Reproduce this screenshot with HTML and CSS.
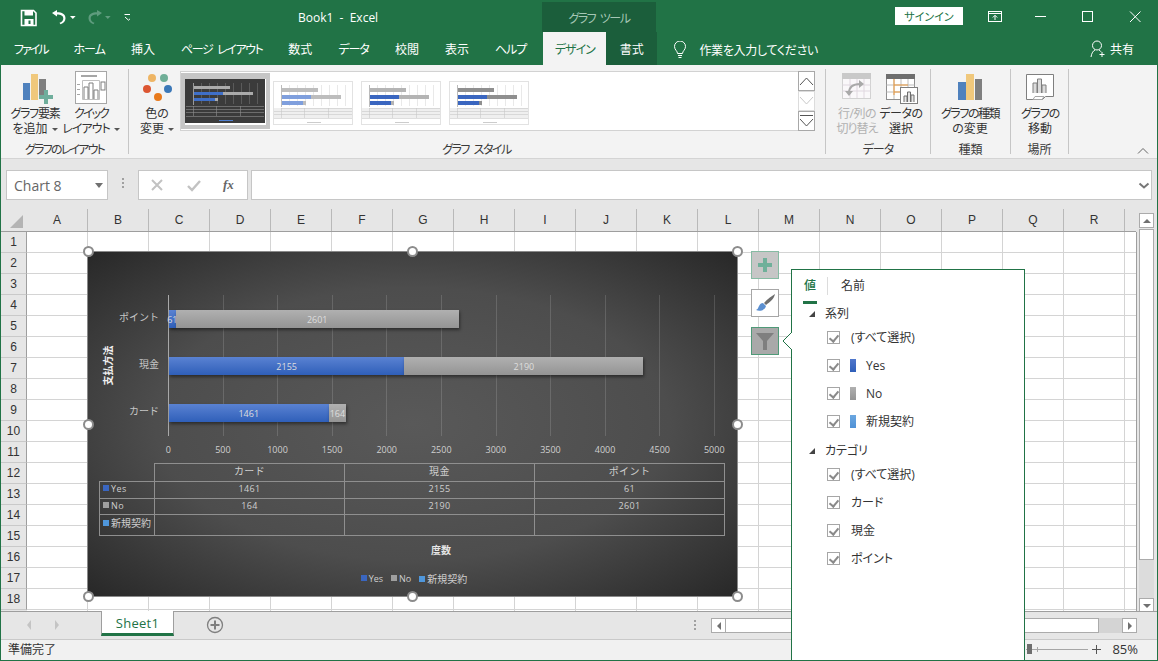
FILE: index.html
```html
<!DOCTYPE html>
<html lang="ja">
<head>
<meta charset="utf-8">
<title>Book1 - Excel</title>
<link rel="stylesheet" href="styles.css">
</head>
<body>
<svg class="defs" width="0" height="0">
  <symbol id="thumb" viewBox="0 0 80 44">
    <rect width="80" height="44" fill="#fff"/>
    <g fill="#e9e9e9"><rect x="16" y="4" width="1" height="21"/><rect x="24" y="4" width="1" height="21"/><rect x="32" y="4" width="1" height="21"/><rect x="40" y="4" width="1" height="21"/><rect x="48" y="4" width="1" height="21"/><rect x="56" y="4" width="1" height="21"/><rect x="64" y="4" width="1" height="21"/><rect x="72" y="4" width="1" height="21"/></g>
    <rect class="tg" x="9" y="7" width="36" height="4"/><rect class="tb" x="9" y="14" width="29" height="4"/><rect class="tg" x="38" y="14" width="30" height="4"/><rect class="tb" x="9" y="20" width="21" height="4"/><rect class="tg" x="30" y="20" width="3" height="4"/>
    <rect x="8" y="4" width="1" height="22" fill="#bbb"/>
    <rect x="1" y="27" width="78" height="10" fill="#efefef"/>
    <g fill="#c8c8c8"><rect x="8" y="27" width="71" height=".6"/><rect x="1" y="30" width="78" height=".6"/><rect x="1" y="33" width="78" height=".6"/><rect x="1" y="37" width="78" height=".6"/><rect x="8" y="27" width=".6" height="10"/><rect x="31" y="27" width=".6" height="10"/><rect x="55" y="27" width=".6" height="10"/></g>
    <rect x="34" y="41" width="14" height="1" fill="#ccc"/>
  </symbol>
</svg>
<div class="app">
  <header class="titlebar">
    <div class="qat">
      <svg width="130" height="32" viewBox="0 0 130 32">
        <path d="M21.5 10.5h12l2.5 2.500v12.500h-14.500z" fill="none" stroke="#fff" stroke-width="1.600"/>
        <rect x="24.500" y="10.500" width="8.500" height="5" fill="#fff"/><rect x="24.500" y="19" width="9" height="6" fill="#fff"/><rect x="28.500" y="20.500" width="2" height="3.500" fill="#217346"/>
        <path d="M52 13l5-3v2.200c5 0 8.500 1.800 8.500 6 0 3-2 5-5 6l-1-1.400c2.200-.8 3.800-2.300 3.800-4.400 0-2.800-2.700-3.900-6.300-3.900v2.100z" fill="#fff"/>
        <path d="M70 16h5.600l-2.800 3z" fill="#fff"/>
        <path d="M102 13l-5-3v2.200c-5 0-8.500 1.800-8.500 6 0 3 2 5 5 6l1-1.400c-2.200-.8-3.800-2.300-3.800-4.400 0-2.800 2.700-3.900 6.300-3.900v2.100z" fill="#5f9c7e"/>
        <path d="M105 16h5.600l-2.800 3z" fill="#5f9c7e"/>
        <path d="M124.500 14.500h8M125 17l3.500 3.200 3.500-3.200" fill="none" stroke="#fff" stroke-width="1"/>
      </svg>
    </div>
    <div class="doc-title">Book1&nbsp; - &nbsp;Excel</div>
    <div class="ctx-title">グラフ ツール</div>
    <button class="signin">サインイン</button>
    <svg class="winctl" width="170" height="32" viewBox="0 0 170 32">
      <g fill="none" stroke="#fff" stroke-width="1">
        <rect x="7.500" y="11.500" width="13" height="10"/><path d="M7.500 13.500h13M14 20v-4.500M11.800 17.500l2.200-2.200 2.200 2.200"/>
        <path d="M54 16.500h11"/>
        <rect x="101.500" y="11.500" width="10" height="10"/>
        <path d="M149 11.500l10.500 10.500M159.500 11.500l-10.500 10.500"/>
      </g>
    </svg>
  </header>

  <nav class="tabs">
    <a class="tab t-file ls2">ファイル</a>
    <a class="tab ls1">ホーム</a>
    <a class="tab">挿入</a>
    <a class="tab t-page">ページ レイアウト</a>
    <a class="tab">数式</a>
    <a class="tab ls1">データ</a>
    <a class="tab">校閲</a>
    <a class="tab">表示</a>
    <a class="tab t-help ls1">ヘルプ</a>
    <a class="tab tab-on ls1">デザイン</a>
    <a class="tab tab-ctx">書式</a>
    <div class="tell">
      <svg width="14" height="18" viewBox="0 0 14 18"><path d="M4.500 12.500c0-2.500-3-3.700-3-7a5.500 5.500 0 0 1 11 0c0 3.300-3 4.500-3 7zM5 14.500h4M5.500 16.500h3" fill="none" stroke="#fff" stroke-width="1"/></svg>
      <span>作業を入力してください</span>
    </div>
    <div class="share">
      <svg width="16" height="18" viewBox="0 0 16 18"><circle cx="7" cy="5.500" r="4.500" fill="none" stroke="#fff"/><path d="M1 17c.5-4 2.500-6.500 4-7M9 10c.8.300 1.500 1 2 1.800M12 12v5M9.500 14.500h5" fill="none" stroke="#fff"/></svg>
      <span>共有</span>
    </div>
  </nav>

  <section class="ribbon">
    <div class="group g-layout">
      <div class="group-body">
        <div class="rbtn w56">
          <svg width="36" height="34" viewBox="0 0 36 34"><rect x="6" y="12" width="7" height="17" fill="#4f81bd"/><rect x="14" y="3" width="7" height="26" fill="#f0c87c"/><rect x="22" y="8" width="7" height="16" fill="#7f7f7f"/><path d="M27 19h4v5h5v4h-5v5h-4v-5h-5v-4h5z" fill="#6fae9c"/></svg>
          <span class="ls12">グラフ要素</span><span>を追加<i class="caret"></i></span>
        </div>
        <div class="rbtn w56">
          <svg width="36" height="34" viewBox="0 0 36 34"><rect x="2.500" y=".5" width="31" height="32" fill="#fff" stroke="#a6a6a6"/><rect x="8" y="4" width="16" height="2" fill="#a6a6a6"/><path d="M9.500 9.500h17v19h-17z" fill="none" stroke="#bfbfbf"/><path d="M11 28v-12h4v12M16 28v-16h4v16M21 28v-9h4v9" fill="#fff" stroke="#7f7f7f"/><rect x="28" y="11" width="4" height="8" fill="#fff" stroke="#7f7f7f"/><g fill="#a6a6a6"><rect x="4" y="13" width="3" height="1"/><rect x="4" y="18" width="3" height="1"/><rect x="4" y="23" width="3" height="1"/></g></svg>
          <span class="ls2">クイック</span><span class="ls1">レイアウト<i class="caret"></i></span>
        </div>
      </div>
      <div class="group-label ls18">グラフのレイアウト</div>
    </div>

    <div class="group g-style">
      <div class="group-body">
        <div class="rbtn w48">
          <svg width="36" height="34" viewBox="0 0 36 34"><circle cx="13" cy="7" r="4" fill="#eeb565"/><circle cx="25" cy="7" r="4" fill="#6fae97"/><circle cx="8" cy="18" r="4" fill="#dc5632"/><circle cx="29" cy="18" r="4" fill="#3b78b8"/><circle cx="19" cy="26" r="4" fill="#e87a1c"/></svg>
          <span>色の</span><span>変更<i class="caret"></i></span>
        </div>
        <div class="gallery">
          <div class="thumb thumb-on">
            <svg class="thumb-dark" width="80" height="44" viewBox="0 0 80 44">
              <rect width="80" height="44" fill="#3b3b3b"/>
              <g fill="#5a5a5a"><rect x="16" y="4" width="1" height="21"/><rect x="24" y="4" width="1" height="21"/><rect x="32" y="4" width="1" height="21"/><rect x="40" y="4" width="1" height="21"/><rect x="48" y="4" width="1" height="21"/><rect x="56" y="4" width="1" height="21"/><rect x="64" y="4" width="1" height="21"/><rect x="72" y="4" width="1" height="21"/></g>
              <rect x="9" y="7" width="36" height="3" fill="#aaa"/><rect x="9" y="13" width="29" height="3" fill="#3f6fc8"/><rect x="38" y="13" width="30" height="3" fill="#aaa"/><rect x="9" y="19" width="21" height="3" fill="#3f6fc8"/><rect x="30" y="19" width="3" height="3" fill="#aaa"/>
              <rect x="8" y="4" width="1" height="22" fill="#999"/>
              <g fill="#8f8f8f"><rect x="1" y="27" width="78" height=".6"/><rect x="1" y="30" width="78" height=".6"/><rect x="1" y="33" width="78" height=".6"/><rect x="1" y="37" width="78" height=".6"/><rect x="8" y="27" width=".6" height="10"/><rect x="31" y="27" width=".6" height="10"/><rect x="55" y="27" width=".6" height="10"/></g>
              <rect x="34" y="41" width="14" height="1" fill="#4f7fd0"/>
            </svg>
          </div>
          <svg class="thumb-light th-a" width="80" height="44"><use href="#thumb"/></svg>
          <svg class="thumb-light th-b" width="80" height="44"><use href="#thumb"/></svg>
          <svg class="thumb-light th-c" width="80" height="44"><use href="#thumb"/></svg>
          <div class="spin">
            <div class="spin-btn"><svg width="15" height="10" viewBox="0 0 15 10"><path d="M1 9l6.500-7 6.500 7" fill="none" stroke="#555"/></svg></div>
            <div class="spin-btn off"><svg width="15" height="10" viewBox="0 0 15 10"><path d="M1 1l6.500 7 6.500-7" fill="none" stroke="#c9c9c9"/></svg></div>
            <div class="spin-btn"><svg width="15" height="14" viewBox="0 0 15 14"><path d="M1 1.500h13M1 5l6.500 7 6.500-7" fill="none" stroke="#555"/></svg></div>
          </div>
        </div>
      </div>
      <div class="group-label gl-style">グラフ スタイル</div>
    </div>

    <div class="group g-data">
      <div class="group-body">
        <div class="rbtn w44 off">
          <svg width="36" height="34" viewBox="0 0 36 34"><rect x="3.500" y="2.500" width="28" height="25" fill="#faf8fa" stroke="#d2d2d2"/><rect x="3" y="2" width="29" height="6" fill="#c9c9c9"/><path d="M3.500 14h28M3.500 20h28M11 8v19M18 8v19M25 8v19" stroke="#e0d8e0" fill="none"/><path d="M10 22c0-6 4-9 11-9" fill="none" stroke="#a9a9a9" stroke-width="2"/><path d="M20 9l5 4-5 4zM6 20l4 5 4-5z" fill="#a9a9a9"/></svg>
          <span class="ls05">行/列の</span><span class="ls1">切り替え</span>
        </div>
        <div class="rbtn w44">
          <svg width="36" height="34" viewBox="0 0 36 34"><rect x="3.500" y="3.500" width="28" height="25" fill="#fff" stroke="#8f8f8f"/><rect x="3" y="3" width="29" height="5" fill="#6e6e6e"/><path d="M3.500 14h28M3.500 21h28M11 8v20M18 8v20M25 8v20" stroke="#bdbdbd" fill="none"/><path d="M11 8v16M11 14h14M11 21h7" stroke="#ed9a3c" fill="none"/><rect x="17.500" y="16.500" width="17" height="16" fill="#fff" stroke="#7f7f7f"/><path d="M21 31v-6h3v6M24.500 31v-10h3v10M28 31v-7h3v7" fill="#e6e6e6" stroke="#6e6e6e"/></svg>
          <span class="ls05">データの</span><span>選択</span>
        </div>
      </div>
      <div class="group-label ls1">データ</div>
    </div>

    <div class="group g-type">
      <div class="group-body">
        <div class="rbtn w70">
          <svg width="36" height="34" viewBox="0 0 36 34"><rect x="6" y="11" width="8" height="18" fill="#4f81bd"/><rect x="14" y="3" width="8" height="26" fill="#f0c87c"/><rect x="23" y="8" width="7" height="21" fill="#7f7f7f"/></svg>
          <span class="ls15">グラフの種類</span><span>の変更</span>
        </div>
      </div>
      <div class="group-label">種類</div>
    </div>

    <div class="group g-loc">
      <div class="group-body">
        <div class="rbtn w50">
          <svg width="36" height="34" viewBox="0 0 36 34"><path d="M4.500 3.500h27v22h-8l-3 3h-16z" fill="#fff" stroke="#7f7f7f"/><path d="M11 22v-10h4v10M15.500 22v-14h4v14M20 22v-8h4v8" fill="#dcdcdc" stroke="#7f7f7f"/><path d="M13 25.500h9l-2 3h-9z" fill="#fff" stroke="#a6a6a6"/></svg>
          <span class="ls12">グラフの</span><span>移動</span>
        </div>
      </div>
      <div class="group-label">場所</div>
    </div>

    <svg class="collapse" width="12" height="8" viewBox="0 0 12 8"><path d="M1 6.500l5-5 5 5" fill="none" stroke="#666"/></svg>
  </section>

  <section class="formula">
    <div class="namebox"><span>Chart 8</span><i class="tri-down"></i></div>
    <div class="fdots"><i></i><i></i><i></i></div>
    <div class="fxbox">
      <svg width="14" height="14" viewBox="0 0 14 14"><path d="M2 2l10 10M12 2L2 12" stroke="#c2c2c2" stroke-width="2" fill="none"/></svg>
      <svg width="16" height="14" viewBox="0 0 16 14"><path d="M2 8l4 4 8-9" stroke="#c2c2c2" stroke-width="2.400" fill="none"/></svg>
      <span class="fx">fx</span>
    </div>
    <div class="finput"><svg width="12" height="8" viewBox="0 0 12 8"><path d="M1.500 1.500l4.500 4 4.500-4" stroke="#777" stroke-width="2" fill="none"/></svg></div>
  </section>

  <section class="sheet">
    <div class="sheet-main">
      <div class="colheads">
        <div class="corner"><svg width="14" height="14" viewBox="0 0 14 14"><path d="M13 0v13H0z" fill="#b4b4b4"/></svg></div>
        <div class="ch">A</div><div class="ch">B</div><div class="ch">C</div><div class="ch">D</div><div class="ch">E</div><div class="ch">F</div><div class="ch">G</div><div class="ch">H</div><div class="ch">I</div><div class="ch">J</div><div class="ch">K</div><div class="ch">L</div><div class="ch">M</div><div class="ch">N</div><div class="ch">O</div><div class="ch">P</div><div class="ch">Q</div><div class="ch">R</div>
      </div>
      <div class="sheet-body">
        <div class="rowheads">
          <div class="rh">1</div><div class="rh">2</div><div class="rh">3</div><div class="rh">4</div><div class="rh">5</div><div class="rh">6</div><div class="rh">7</div><div class="rh">8</div><div class="rh">9</div><div class="rh">10</div><div class="rh">11</div><div class="rh">12</div><div class="rh">13</div><div class="rh">14</div><div class="rh">15</div><div class="rh">16</div><div class="rh">17</div><div class="rh">18</div>
        </div>
        <div class="cells"></div>
      </div>
    </div>
    <div class="vscroll">
      <div class="sb-btn"><i class="tri-up"></i></div>
      <div class="sb-thumb"></div>
      <div class="sb-track"></div>
      <div class="sb-btn"><i class="tri-down small"></i></div>
    </div>
  </section>

  <section class="tabbar">
    <div class="sheetnav"><i class="nav-l"></i><i class="nav-r"></i></div>
    <div class="sheettab">Sheet1</div>
    <svg class="addsheet" width="18" height="18" viewBox="0 0 18 18"><circle cx="9" cy="9" r="7.500" fill="none" stroke="#7f7f7f" stroke-width="1.300"/><path d="M9 4.500v9M4.500 9h9" stroke="#7f7f7f" stroke-width="2"/></svg>
    <div class="fdots tdots"><i></i><i></i><i></i></div>
    <div class="hscroll">
      <div class="sb-btn h"><i class="tri-left"></i></div>
      <div class="hthumb"></div>
      <div class="htrack"></div>
      <div class="sb-btn h"><i class="tri-right"></i></div>
    </div>
  </section>

  <footer class="status">
    <span class="ready">準備完了</span>
    <div class="zoomctl">
      <svg width="76" height="12" viewBox="0 0 76 12"><path d="M0 6.500h62M11.500 4v5" stroke="#a6a6a6" fill="none"/><rect x="1" y="1" width="5" height="10" fill="#6e6e6e"/><path d="M66 6.500h9M70.500 2v9" stroke="#555" fill="none"/></svg>
      <span class="zoomval">85%</span>
    </div>
  </footer>

  <div class="chart">
    <div class="chart-main">
      <div class="ytitle"><span>支払方法</span></div>
      <div class="ylabels"><span>ポイント</span><span>現金</span><span>カード</span></div>
      <div class="plot">
        <div class="bar"><div class="seg blue" style="width:6.7px">61</div><div class="seg gray" style="width:283px">2601</div></div>
        <div class="bar"><div class="seg blue" style="width:235.300px">2155</div><div class="seg gray" style="width:239.200px">2190</div></div>
        <div class="bar"><div class="seg blue" style="width:159.500px">1461</div><div class="seg gray" style="width:17.900px">164</div></div>
      </div>
    </div>
    <div class="xlabels"><span>0</span><span>500</span><span>1000</span><span>1500</span><span>2000</span><span>2500</span><span>3000</span><span>3500</span><span>4000</span><span>4500</span><span>5000</span></div>
    <table class="dtable">
      <colgroup><col class="c0"><col class="c1"><col class="c1"><col class="c1"></colgroup>
      <tr class="r-head"><td class="blank"></td><td>カード</td><td>現金</td><td>ポイント</td></tr>
      <tr class="r-a"><th><i class="sw s-blue"></i>Yes</th><td>1461</td><td>2155</td><td>61</td></tr>
      <tr class="r-b"><th><i class="sw s-gray"></i>No</th><td>164</td><td>2190</td><td>2601</td></tr>
      <tr class="r-c"><th><i class="sw s-sky"></i>新規契約</th><td></td><td></td><td></td></tr>
    </table>
    <div class="xtitle">度数</div>
    <div class="legend">
      <span><i class="sw s-blue"></i>Yes</span><span><i class="sw s-gray"></i>No</span><span><i class="sw s-sky"></i>新規契約</span>
    </div>
    <i class="handle h-tl"></i><i class="handle h-tc"></i><i class="handle h-tr"></i>
    <i class="handle h-ml"></i><i class="handle h-mr"></i>
    <i class="handle h-bl"></i><i class="handle h-bc"></i><i class="handle h-br"></i>
  </div>

  <div class="floatbtns">
    <div class="fbtn fb-plus"><svg width="18" height="18" viewBox="0 0 18 18"><path d="M7 2h4v5h5v4h-5v5H7v-5H2V7h5z" fill="#6fb09a"/></svg></div>
    <div class="fbtn fb-brush"><svg width="24" height="24" viewBox="0 0 24 24"><path d="M22 3c-3 2-8 5-11 9l2 2c4-3 8-6 9-11z" fill="#6e6e6e"/><path d="M10 12l3 3c-1 4-6 6-10 4 2-1 2-2 3-4 1-2 2-3 4-3z" fill="#5b8fd0"/></svg></div>
    <div class="fbtn fb-filter"><svg width="22" height="22" viewBox="0 0 22 22"><path d="M2 3h18l-7 8v9h-4v-9z" fill="#7f7f7f"/></svg></div>
  </div>

  <aside class="panel">
    <svg class="panel-tip" width="11" height="20" viewBox="0 0 11 20"><path d="M10 1L1 10l9 9" fill="#fff" stroke="#217346"/><rect x="10" y="1" width="1" height="18" fill="#fff"/></svg>
    <div class="ptabs">
      <div class="ptab-on">値</div>
      <i class="pdiv"></i>
      <div class="ptab">名前</div>
    </div>
    <div class="phead"><i class="ptri"></i>系列</div>
    <div class="prow"><i class="cb"></i><span>(すべて選択)</span></div>
    <div class="prow"><i class="cb"></i><i class="psw p-blue"></i><span>Yes</span></div>
    <div class="prow"><i class="cb"></i><i class="psw p-gray"></i><span>No</span></div>
    <div class="prow"><i class="cb"></i><i class="psw p-sky"></i><span>新規契約</span></div>
    <div class="phead ph2"><i class="ptri"></i>カテゴリ</div>
    <div class="prow"><i class="cb"></i><span>(すべて選択)</span></div>
    <div class="prow"><i class="cb"></i><span>カード</span></div>
    <div class="prow"><i class="cb"></i><span>現金</span></div>
    <div class="prow"><i class="cb"></i><span>ポイント</span></div>
  </aside>
</div>
</body>
</html>
```
FILE: styles.css
```css
* { box-sizing: border-box; }
html, body { margin: 0; padding: 0; background: #fff; }
body { font-family: "Open Sans", "Noto Sans CJK JP", sans-serif; font-size: 12px; color: #333; }
.defs { position: absolute; }
i { display: block; font-style: normal; }
.app {
  position: relative; width: 1158px; height: 661px; overflow: hidden;
  border: 1px solid #217346; border-top: 0;
  display: flex; flex-direction: column;
  background: #e6e6e6;
  font-feature-settings: "palt";
}
.ls05 { letter-spacing: -.5px; }
.ls1 { letter-spacing: -1px; }
.ls12 { letter-spacing: -1.2px; }
.ls15 { letter-spacing: -1.5px; }
.ls18 { letter-spacing: -1.8px; }
.ls2 { letter-spacing: -2px; }

/* title bar */
.titlebar { height: 32px; margin: 0 -1px; background: #217346; display: flex; color: #fff; flex: none; }
.qat { width: 298px; flex: none; }
.qat svg { display: block; }
.doc-title { width: 244px; flex: none; line-height: 35px; font-size: 12px; font-family: "Open Sans", sans-serif; }
.ctx-title { width: 114px; margin-top: 2px; background: #1b5e3b; color: #a5c7b5; text-align: center; line-height: 33px; flex: none; letter-spacing: -1.5px; word-spacing: 3px; }
.signin {
  margin: 7px 0 0 239px; width: 68px; height: 18px; border: 0; padding: 0; background: #fff;
  color: #217346; font: 11px "Noto Sans CJK JP", sans-serif; font-feature-settings: "palt";
}
.winctl { margin-left: 18px; flex: none; display: block; }

/* tabs */
.tabs { height: 33px; margin: 0 -1px; background: #217346; display: flex; color: #fff; flex: none; padding-left: 1px; }
.tab { padding: 0 13px; line-height: 35px; height: 33px; font-size: 12px; white-space: nowrap; }
.t-file { padding-right: 13px; }
.t-page { letter-spacing: -1.4px; word-spacing: 3px; }
.t-help { padding-right: 17px; }
.tab-on { width: 63px; padding: 0; text-align: center; background: #f3f3f3; color: #217346; }
.tab-ctx { width: 51px; padding: 0; text-align: center; background: #1b5e3b; }
.tell { display: flex; align-items: center; gap: 12px; margin-left: 16px; padding-top: 2px; white-space: nowrap; letter-spacing: -.3px; }
.tell svg { display: block; flex: none; }
.share { display: flex; align-items: center; gap: 4px; margin-left: auto; padding: 1px 24px 0 0; white-space: nowrap; }
.share svg { display: block; flex: none; }

/* ribbon */
.ribbon { height: 94px; background: #f3f3f3; border-bottom: 1px solid #d4d4d4; display: flex; position: relative; flex: none; }
.group { display: flex; flex-direction: column; height: 85px; margin-top: 4px; border-right: 1px solid #c6c6c6; flex: none; position: relative; }
.group-body { display: flex; height: 73px; padding-top: 2px; flex: none; }
.group-label { text-align: center; line-height: 16px; font-size: 12px; color: #3a3a3a; }
.g-layout { width: 128px; }
.g-layout .group-body { padding-left: 6px; }
.g-style { width: 697px; }
.g-style .group-body { padding-left: 4px; }
.gl-style { padding-right: 1px; letter-spacing: -1.5px; word-spacing: 3px; }
.g-data { width: 105px; }
.g-data .group-body { padding-left: 9px; }
.g-type { width: 80px; }
.g-type .group-body { padding-left: 4px; }
.g-loc { width: 58px; }
.g-loc .group-body { padding-left: 4px; }
.rbtn { display: flex; flex-direction: column; align-items: center; flex: none; line-height: 15px; font-size: 12px; color: #333; white-space: nowrap; }
.rbtn svg { display: block; margin-bottom: 1px; flex: none; }
.w56 { width: 56px; }
.w48 { width: 48px; }
.w44 { width: 44px; }
.w70 { width: 70px; }
.w50 { width: 50px; }
.rbtn.off { color: #b1b1b1; }
.caret { display: inline-block; width: 0; height: 0; border: 3px solid transparent; border-top: 3px solid #555; border-bottom: 0; margin-left: 4px; vertical-align: 2px; }
.gallery { width: 635px; height: 60px; margin-left: -1px; background: #fff; border: 1px solid #d2d2d2; display: flex; align-items: center; position: relative; padding-left: 92px; gap: 8px; flex: none; }
.thumb-on { position: absolute; left: 0; top: 1px; width: 89px; height: 56px; background: #fff; border: 4px solid #c6c6c6; border-top-width: 6px; border-bottom-width: 4px; }
.thumb-dark, .thumb-light { display: block; flex: none; }
.thumb-light { margin-top: 3px; outline: 1px solid #e2e2e2; outline-offset: -1px; }
.th-a { --b: #7f9fdd; --g: #bdbdbd; }
.th-b { --b: #3a66c0; --g: #b4b4b4; }
.th-c { --b: #3a66c0; --g: #8f8f8f; }
.tb { fill: var(--b); }
.tg { fill: var(--g); }
.spin { position: absolute; right: -1px; top: -1px; width: 17px; height: 60px; display: flex; flex-direction: column; background: #fff; }
.spin-btn { height: 20px; border: 1px solid #a8a8a8; display: flex; align-items: center; justify-content: center; }
.spin-btn.off { border-color: #dcdcdc; }
.spin-btn svg { display: block; margin: 0; }
.collapse { position: absolute; right: 8px; bottom: 3px; }

/* formula bar */
.formula { height: 50px; padding: 11px 4px 0 5px; display: flex; background: #e6e6e6; flex: none; }
.namebox { width: 102px; height: 30px; background: #fff; border: 1px solid #c6c6c6; display: flex; align-items: center; justify-content: space-between; padding: 0 4px 0 7px; font-size: 14px; color: #666; }
.tri-down { width: 0; height: 0; border: 4.500px solid transparent; border-top: 5px solid #707070; border-bottom: 0; }
.fdots { width: 30px; height: 26px; display: flex; flex-direction: column; align-items: center; justify-content: center; gap: 2px; }
.fdots i { width: 2px; height: 2px; background: #a0a0a0; }
.fxbox { width: 110px; height: 30px; background: #fff; border: 1px solid #c6c6c6; display: flex; align-items: center; padding-left: 11px; }
.fxbox svg { display: block; flex: none; }
.fxbox svg + svg { margin-left: 22px; }
.fx { margin-left: 21px; font: italic 700 13px "Liberation Serif", serif; color: #666; }
.finput { width: 901px; height: 30px; margin-left: 3px; background: #fff; border: 1px solid #c6c6c6; display: flex; align-items: center; justify-content: flex-end; padding: 2px 1px 0 0; }
.finput svg { display: block; }

/* sheet */
.sheet { height: 403px; display: flex; background: #e6e6e6; flex: none; }
.sheet-main { width: 1136px; display: flex; flex-direction: column; flex: none; }
.colheads { height: 23px; display: flex; border-bottom: 1px solid #9e9e9e; flex: none; margin-right: 1px; }
.corner { width: 26px; flex: none; padding: 6px 0 0 9px; }
.corner svg { display: block; }
.ch { width: 61px; flex: none; text-align: center; line-height: 22px; font-size: 12px; font-family: "Liberation Sans", sans-serif; color: #333; position: relative; border-right: 1px solid #b9b9b9; }
.sheet-body { flex: 1; display: flex; }
.rowheads { width: 26px; flex: none; }
.rh { height: 21px; line-height: 20px; text-align: center; font-size: 12px; font-family: "Liberation Sans", sans-serif; color: #333; border-bottom: 1px solid #c9c9c9; border-right: 1px solid #9e9e9e; }
.cells {
  flex: 1; border-right: 1px solid #9e9e9e; background-color: #fff;
  background-image:
    repeating-linear-gradient(90deg, transparent 0 60px, #d4d4d4 60px 61px),
    repeating-linear-gradient(180deg, transparent 0 20px, #d4d4d4 20px 21px);
}
.vscroll { width: 15px; margin: 4px 0 0 2px; display: flex; flex-direction: column; flex: none; }
.sb-btn { width: 15px; height: 15px; background: #fff; border: 1px solid #ababab; display: flex; align-items: center; justify-content: center; flex: none; }
.sb-thumb { height: 331px; margin-top: 1px; background: #fff; border: 1px solid #ababab; flex: none; }
.sb-track { height: 38px; background: #dcdcdc; flex: none; }
.tri-up { width: 0; height: 0; border: 4px solid transparent; border-bottom: 4px solid #707070; border-top: 0; }
.tri-down.small { border-width: 4px; border-top-color: #707070; border-bottom: 0; }
.tri-left { width: 0; height: 0; border: 4px solid transparent; border-right: 4px solid #707070; border-left: 0; }
.tri-right { width: 0; height: 0; border: 4px solid transparent; border-left: 4px solid #707070; border-right: 0; }

/* sheet tabs */
.tabbar { height: 28px; border-top: 1px solid #9e9e9e; margin-top: -1px; background: #e6e6e6; display: flex; flex: none; position: relative; }
.sheetnav { width: 100px; flex: none; display: flex; align-items: center; gap: 24px; padding: 0 0 2px 26px; }
.nav-l { width: 0; height: 0; border: 5px solid transparent; border-right: 4px solid #c4c4c4; border-left: 0; }
.nav-r { width: 0; height: 0; border: 5px solid transparent; border-left: 4px solid #c4c4c4; border-right: 0; }
.sheettab { width: 73px; height: 25px; margin-top: -1px; background: #fff; border: 1px solid #9e9e9e; border-top: 0; border-bottom: 3px solid #217346; text-align: center; font-size: 13px; line-height: 24px; color: #217346; flex: none; letter-spacing: .3px; }
.addsheet { display: block; margin: 4px 0 0 32px; flex: none; }
.tdots { width: 8px; margin-left: 467px; flex: none; }
.hscroll { display: flex; margin: 6px 0 0 12px; height: 15px; flex: none; }
.hthumb { width: 373px; background: #fff; border: 1px solid #ababab; border-left: 0; flex: none; }
.htrack { width: 23px; background: #d4d4d4; flex: none; }

/* status */
.status { flex: 1; background: #f1f1f1; border-top: 1px solid #c9c9c9; display: flex; align-items: center; justify-content: space-between; padding: 0 19px 2px 7px; font-size: 12px; color: #333; }
.zoomctl { display: flex; align-items: center; gap: 10px; }
.zoomctl svg { display: block; }
.zoomval { font-size: 13px; }

/* chart */
.chart {
  position: absolute; left: 87px; top: 252px; width: 649px; height: 344px; padding-top: 43px;
  outline: 1px solid #8a8a8a;
  background: radial-gradient(ellipse 72% 72% at 50% 50%, #595959 0%, #4d4d4d 55%, #262626 100%);
  color: #cfcfcf; font-size: 9px; font-feature-settings: normal;
  font-family: "Open Sans", "Noto Sans CJK JP", sans-serif;
}
.chart-main { height: 141px; display: flex; }
.ytitle { width: 38px; flex: none; display: flex; align-items: center; justify-content: center; font-weight: 700; font-size: 10px; color: #efefef; }
.ytitle span { display: block; white-space: nowrap; transform: rotate(-90deg); }
.ylabels { width: 33px; flex: none; display: flex; flex-direction: column; align-items: flex-end; gap: 29px; padding-top: 13px; font-size: 10px; color: #c6c6c6; }
.ylabels span { height: 18px; line-height: 18px; white-space: nowrap; }
.plot {
  width: 547px; margin-left: 9px; flex: none; padding-top: 15px; display: flex; flex-direction: column; gap: 29px;
  border-left: 1px solid #a8a8a8;
  background-image: repeating-linear-gradient(90deg, transparent 0 53.6px, rgba(255,255,255,.14) 53.6px 54.6px);
}
.bar { display: flex; height: 18px; }
.seg { display: flex; align-items: center; justify-content: center; white-space: nowrap; color: #dedede; box-shadow: 1px 2px 3px rgba(0,0,0,.45); flex: none; }
.blue { background: linear-gradient(#5a82d2, #2f5fb9); }
.gray { background: linear-gradient(#b0b0b0, #949494); }
.xlabels { display: flex; margin: 8px 0 0 53px; height: 12px; line-height: 12px; }
.xlabels span { width: 54.600px; flex: none; text-align: center; }
.dtable { width: 626px; margin: 7px 0 0 11px; border-collapse: collapse; table-layout: fixed; letter-spacing: .4px; }
.c0 { width: 55px; }
.c1 { width: 190px; }
.dtable td, .dtable th { border: 1px solid #8f8f8f; padding: 0; text-align: center; font-weight: 400; white-space: nowrap; line-height: 11px; }
.dtable th { text-align: left; padding-left: 3px; }
.dtable td.blank { border: 0; border-right: 1px solid #8f8f8f; border-bottom: 1px solid #8f8f8f; }
.r-head td { height: 18px; font-size: 10px; padding-bottom: 2px; }
.r-a td, .r-a th { height: 17px; padding-bottom: 3px; }
.r-b td, .r-b th { height: 16px; padding-bottom: 3px; }
.r-c td, .r-c th { height: 21px; font-size: 10px; letter-spacing: 0; padding-bottom: 4px; }
.sw { display: inline-block; width: 6px; height: 6px; margin-right: 2px; vertical-align: 1px; }
.s-blue { background: #3a66c0; }
.s-gray { background: #9f9f9f; }
.s-sky { background: #4f97dc; }
.xtitle { margin: 8px 0 0 303px; width: 100px; height: 12px; line-height: 12px; text-align: center; font-weight: 700; font-size: 10px; color: #e6e6e6; }
.legend { margin-top: 17px; height: 12px; line-height: 12px; display: flex; justify-content: center; gap: 8px; padding-left: 3px; }
.legend span:last-child { font-size: 10px; }
.handle { position: absolute; width: 11px; height: 11px; border-radius: 50%; background: #fff; border: 2px solid #8c8c8c; z-index: 2; }
.h-tl { left: -5px; top: -6px; }
.h-tc { left: 319px; top: -6px; }
.h-tr { right: -6px; top: -6px; }
.h-ml { left: -5px; top: 167px; }
.h-mr { right: -6px; top: 167px; }
.h-bl { left: -5px; bottom: -6px; }
.h-bc { left: 319px; bottom: -6px; }
.h-br { right: -6px; bottom: -6px; }

/* chart buttons */
.floatbtns { position: absolute; left: 750px; top: 251px; display: flex; flex-direction: column; gap: 10px; }
.fbtn { width: 28px; height: 28px; display: flex; align-items: center; justify-content: center; border: 1px solid #a6a6a6; }
.fbtn svg { display: block; }
.fb-plus { background: #c6c6c6; border-color: #86bba3; }
.fb-brush { background: #fff; border-color: #a6a6a6; }
.fb-filter { background: #a9a9a9; border-color: #4f9a78; }

/* filter panel */
.panel { position: absolute; left: 790px; top: 269px; bottom: -1px; width: 234px; background: #fff; border: 1px solid #217346; color: #333; font-size: 12px; }
.panel-tip { position: absolute; left: -10px; top: 61px; display: block; }
.ptabs { display: flex; height: 34px; padding-left: 11px; }
.ptab-on { width: 14px; height: 34px; padding-top: 7px; line-height: 18px; text-align: center; color: #217346; border-bottom: 3px solid #217346; font-weight: 500; }
.pdiv { width: 1px; height: 18px; margin: 7px 13px 0 10px; background: #dcdcdc; }
.ptab { padding-top: 7px; line-height: 18px; }
.phead { height: 19px; display: flex; align-items: center; gap: 10px; padding-left: 17px; line-height: 19px; }
.ph2 { margin-top: 6px; }
.ptri { width: 0; height: 0; border-left: 6px solid transparent; border-bottom: 6px solid #444; }
.prow { height: 28px; display: flex; align-items: center; padding-left: 35px; }
.cb { width: 13px; height: 13px; border: 1px solid #a6a6a6; background: #fff; margin-right: 11px; position: relative; flex: none; }
.cb::after { content: ""; position: absolute; left: 3px; top: 1px; width: 4px; height: 7px; border: solid #8a8a8a; border-width: 0 2px 2px 0; transform: rotate(40deg); }
.psw { width: 6px; height: 13px; margin-right: 10px; flex: none; margin-left: -1px; }
.p-blue { background: linear-gradient(#5077cc, #2f5fb9); }
.p-gray { background: linear-gradient(#b0b0b0, #949494); }
.p-sky { background: linear-gradient(#6ba7e0, #4f91d6); }
```
